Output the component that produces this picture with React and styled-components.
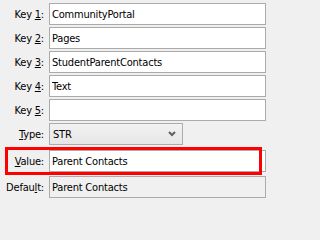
import React from "react";
import styled, { createGlobalStyle } from "styled-components";

const Global = createGlobalStyle`
  html, body { margin: 0; padding: 0; background: #f0f0f0; }
  body { width: 266px; height: 202px; overflow: hidden; }
`;

const Form = styled.div`
  display: flex;
  flex-direction: column;
  gap: 2px;
  padding-top: 3px;
  width: 266px;
  font-family: "DejaVu Sans Condensed", "DejaVu Sans", sans-serif;
  font-size: 11px;
  letter-spacing: -0.2px;
  color: #000;
`;

const Row = styled.div`
  position: relative;
  display: flex;
  align-items: center;
  height: 22px;
  margin-top: ${(p) => p.$extra || 0}px;
`;

const Label = styled.label`
  width: 44px;
  flex: none;
  text-align: right;
  padding-right: 5px;
  white-space: nowrap;
  u { text-decoration: underline; text-underline-offset: 1px; }
`;

const TextBox = styled.input`
  flex: 1;
  min-width: 0;
  box-sizing: border-box;
  height: 22px;
  margin: 0;
  padding: 0 2px;
  border: 1px solid #ababab;
  background: ${(p) => (p.$disabled ? "#f0f0f0" : "#ffffff")};
  font: inherit;
  letter-spacing: inherit;
  color: #000;
  outline: none;
`;

const Combo = styled.div`
  box-sizing: border-box;
  width: 134px;
  height: 22px;
  display: flex;
  align-items: center;
  justify-content: space-between;
  padding: 0 6px 0 3px;
  border: 1px solid #acacac;
  background: linear-gradient(#f2f2f2, #e6e6e6);
`;

const Highlight = styled.div`
  position: absolute;
  left: 5px;
  right: 4px;
  top: -3px;
  bottom: -3px;
  border: 3px solid #ff0000;
  pointer-events: none;
`;

const Chevron = () => (
  <svg width="8" height="6" viewBox="0 0 8 6">
    <path d="M1 1 L4 4 L7 1" fill="none" stroke="#606060" strokeWidth="2" />
  </svg>
);

const keys = ["CommunityPortal", "Pages", "StudentParentContacts", "Text", ""];

export default function App() {
  return (
    <>
      <Global />
      <Form>
        {keys.map((k, i) => (
          <Row key={i}>
            <Label>
              Key <u>{i + 1}</u>:
            </Label>
            <TextBox readOnly defaultValue={k} />
          </Row>
        ))}
        <Row>
          <Label>
            <u>T</u>ype:
          </Label>
          <Combo>
            <span>STR</span>
            <Chevron />
          </Combo>
        </Row>
        <Row $extra={3}>
          <Label>
            <u>V</u>alue:
          </Label>
          <TextBox readOnly defaultValue="Parent Contacts" />
          <Highlight />
        </Row>
        <Row $extra={2}>
          <Label>
            Defau<u>l</u>t:
          </Label>
          <TextBox readOnly $disabled defaultValue="Parent Contacts" />
        </Row>
      </Form>
    </>
  );
}
